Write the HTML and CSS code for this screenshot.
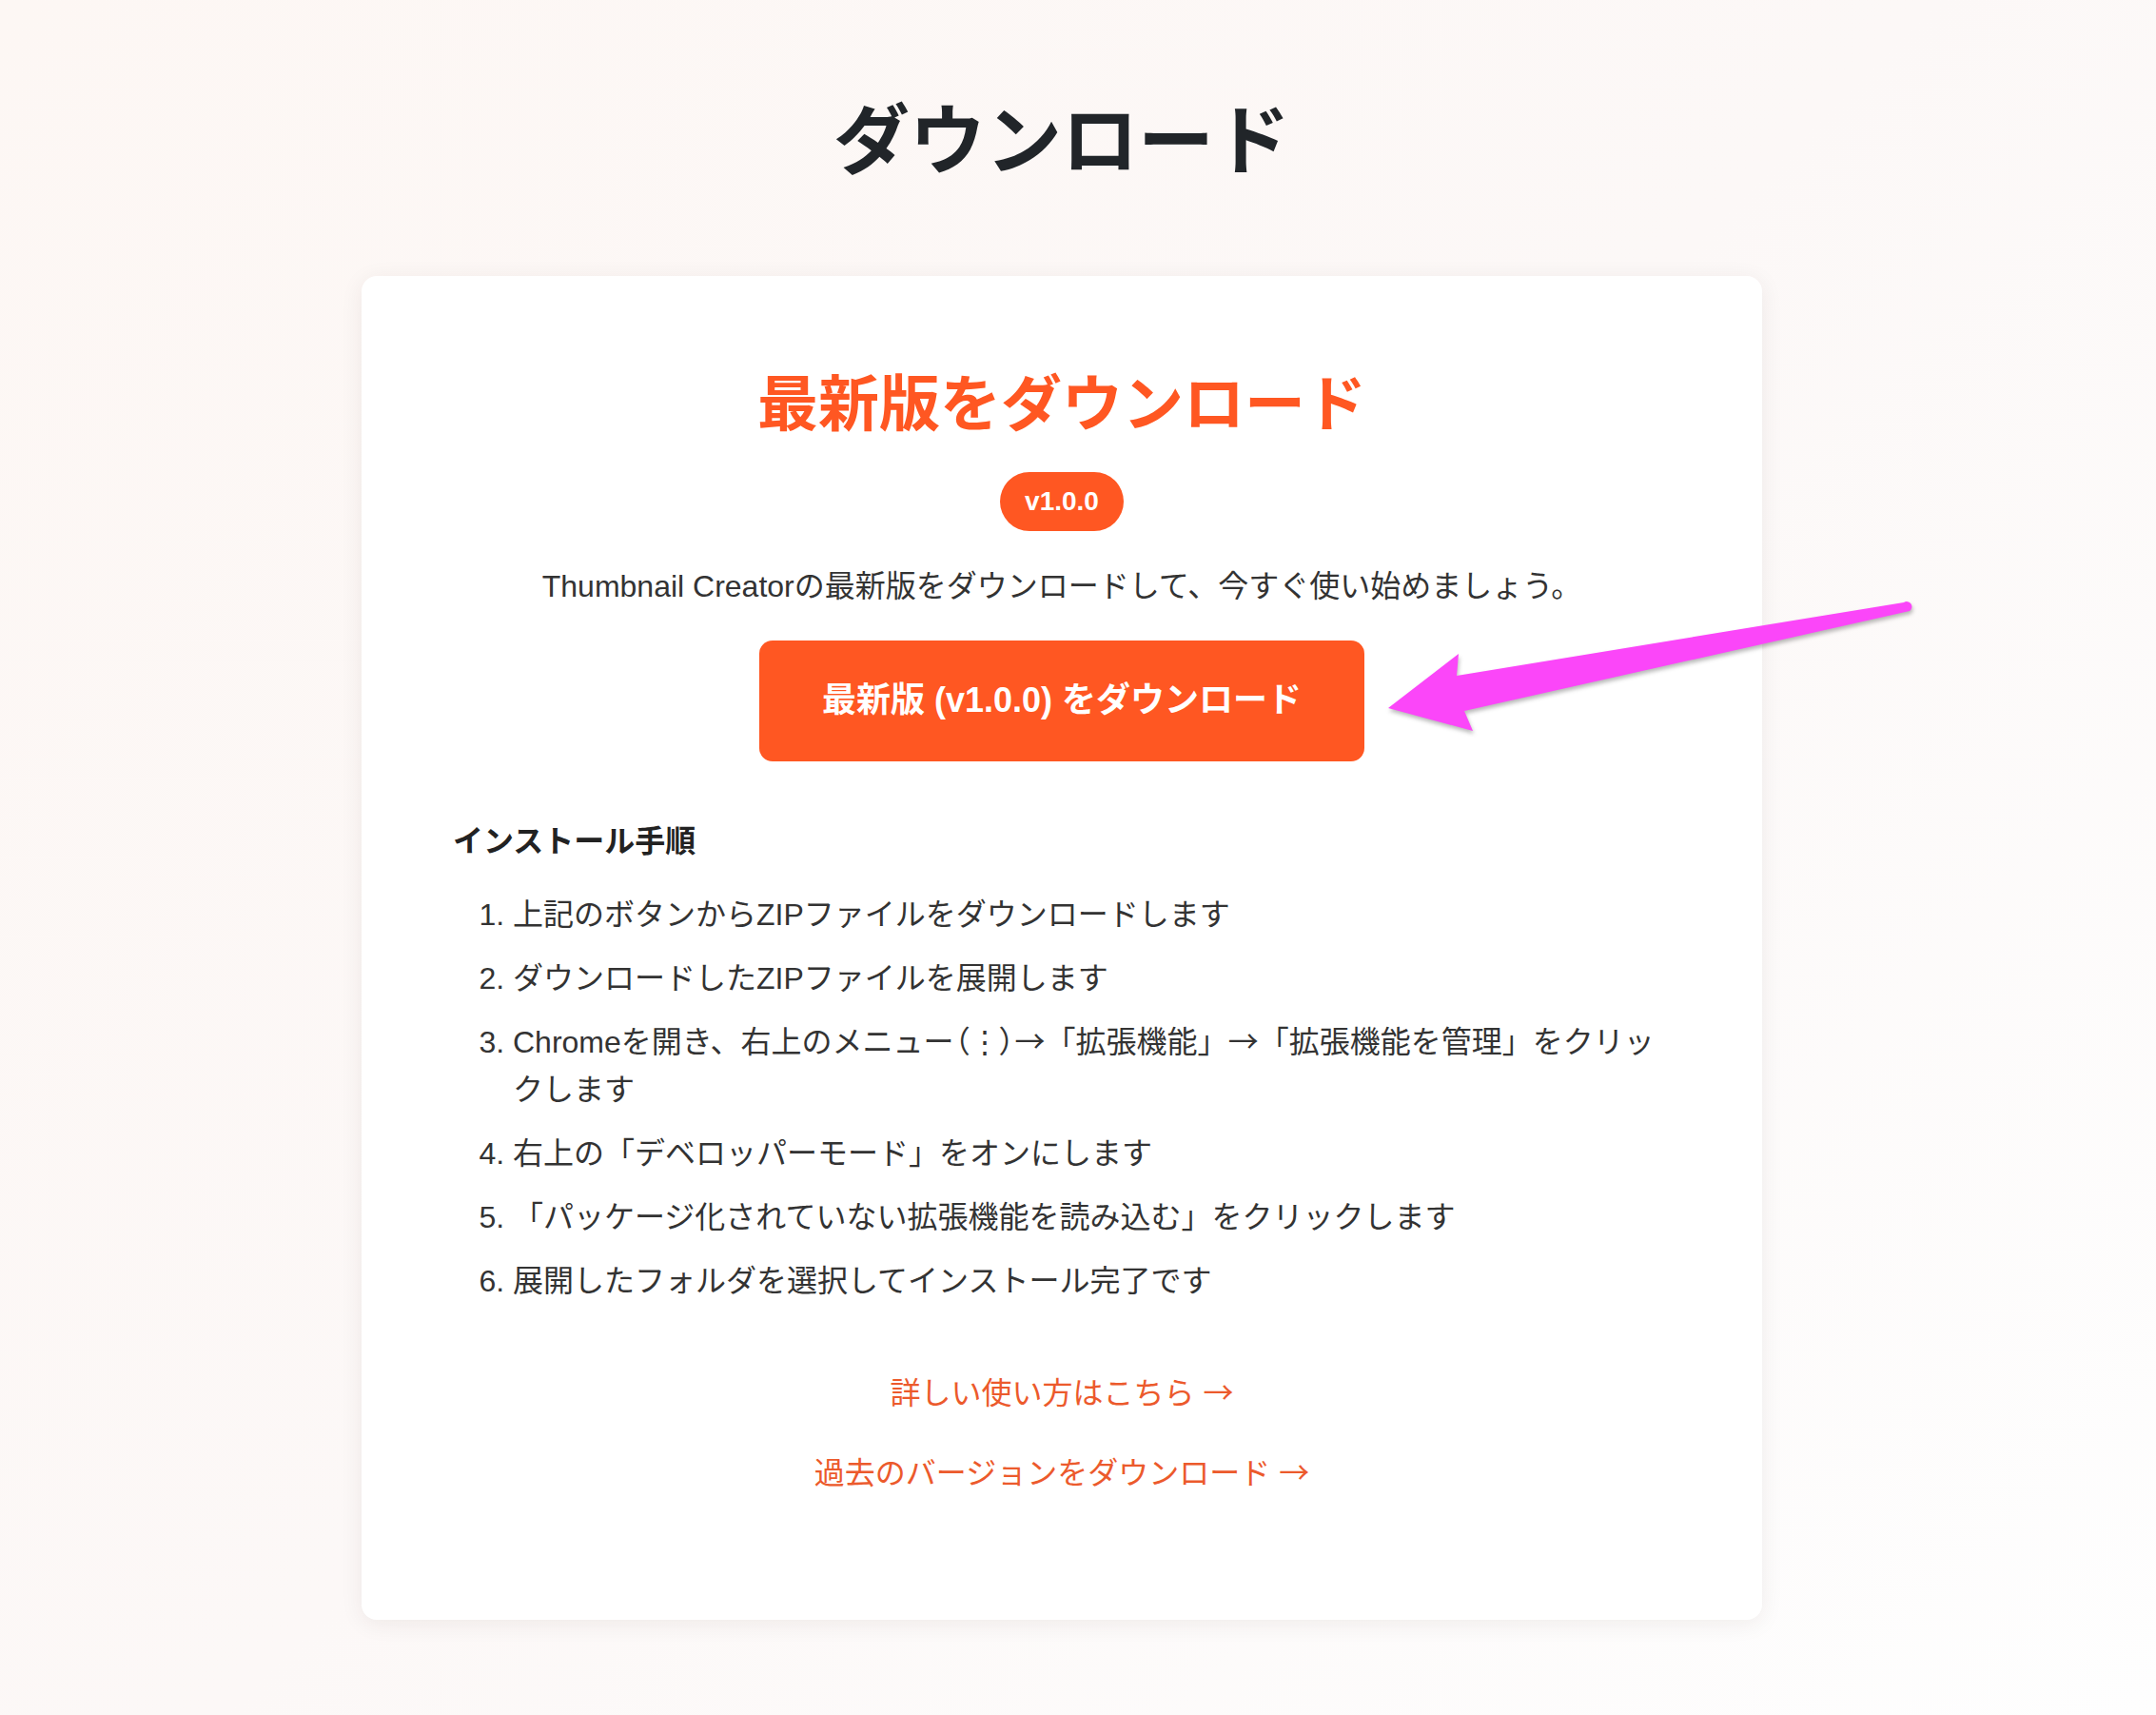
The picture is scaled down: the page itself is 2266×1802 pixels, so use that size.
FILE: index.html
```html
<!DOCTYPE html>
<html lang="ja">
<head>
<meta charset="utf-8">
<title>ダウンロード</title>
<link rel="stylesheet" href="styles.css">
</head>
<body>
<main class="page">
  <h1 class="page-title">ダウンロード</h1>
  <section class="card">
    <h2 class="card-title">最新版をダウンロード</h2>
    <span class="badge">v1.0.0</span>
    <p class="desc">Thumbnail Creatorの最新版をダウンロードして、今すぐ使い始めましょう。</p>
    <a class="download-btn" href="#">最新版 (v1.0.0) をダウンロード</a>
    <h3 class="steps-title">インストール手順</h3>
    <ol class="steps">
      <li>上記のボタンからZIPファイルをダウンロードします</li>
      <li>ダウンロードしたZIPファイルを展開します</li>
      <li>Chromeを開き、右上のメニュー<span class="menu-icon">（⋮）</span><span class="arrow">→</span>「拡張機能」<span class="arrow">→</span>「拡張機能を管理」をクリックします</li>
      <li>右上の「デベロッパーモード」をオンにします</li>
      <li>「パッケージ化されていない拡張機能を読み込む」をクリックします</li>
      <li>展開したフォルダを選択してインストール完了です</li>
    </ol>
    <div class="links">
      <a class="link" href="#">詳しい使い方はこちら <span class="arrow">→</span></a>
      <a class="link" href="#">過去のバージョンをダウンロード <span class="arrow">→</span></a>
    </div>
  </section>
</main>
<svg class="annotation-arrow" width="590" height="170" viewBox="0 0 590 170" aria-hidden="true">
  <path d="M19 124 L93 67 L91 90 L561 13 A5 5 0 0 1 567 22 L99 127 L108 148 Z" fill="#fb46f9"/>
</svg>
</body>
</html>
```

FILE: styles.css
```css
* { box-sizing: border-box; }

html, body { margin: 0; padding: 0; }

body {
  position: relative;
  min-height: 1802px;
  padding-right: 34px;
  background: linear-gradient(135deg, #fdf7f4 0%, #fcf8f7 50%, #fefefe 100%);
  font-family: "Liberation Sans", "Noto Sans CJK JP", sans-serif;
  color: #333333;
}

.page {
  display: flex;
  flex-direction: column;
  align-items: center;
}

.page-title {
  margin: 101px 0 93px;
  font-size: 80px;
  line-height: 96px;
  font-weight: 700;
  color: #212529;
}

.card {
  width: 1472px;
  padding: 95px 96px 96px;
  background: #ffffff;
  border-radius: 16px;
  box-shadow: 0 4px 24px rgba(60, 30, 20, 0.07);
  display: flex;
  flex-direction: column;
  align-items: center;
}

.card-title {
  margin: 0;
  font-size: 64px;
  line-height: 80px;
  font-weight: 700;
  color: #ff5722;
}

.badge {
  margin-top: 31px;
  padding: 10px 26px;
  background: #ff5722;
  color: #ffffff;
  border-radius: 999px;
  font-size: 28px;
  line-height: 42px;
  font-weight: 700;
}

.desc {
  margin: 32px 0 0;
  font-size: 32px;
  line-height: 52px;
  color: #333333;
}

.download-btn {
  margin-top: 31px;
  padding: 36px 66px 37px;
  background: #ff5722;
  color: #ffffff;
  border-radius: 14px;
  font-size: 36px;
  line-height: 54px;
  font-weight: 700;
  text-decoration: none;
}

.steps-title {
  align-self: stretch;
  margin: 60px 0 0;
  font-size: 32px;
  line-height: 48px;
  font-weight: 700;
  color: #222222;
}

.steps {
  align-self: stretch;
  margin: 28px 0 0;
  padding-left: 63px;
  font-size: 32px;
  line-height: 50px;
  color: #333333;
}

.steps li {
  margin-bottom: 17px;
}

.steps li:last-child {
  margin-bottom: 0;
}

.menu-icon {
  font-family: "Noto Sans CJK JP", sans-serif;
  font-feature-settings: "palt";
  line-height: 1;
}

.arrow {
  font-family: "Noto Sans CJK JP", sans-serif;
  line-height: 1;
}

.links {
  margin: 69px 0 34px;
  display: flex;
  flex-direction: column;
  align-items: center;
  gap: 36px;
}

.link {
  font-size: 32px;
  line-height: 48px;
  color: #ec5a2c;
  text-decoration: none;
}

.annotation-arrow {
  position: absolute;
  left: 1440px;
  top: 620px;
  filter: drop-shadow(1px 3px 2px rgba(0, 0, 0, 0.28));
}
```
